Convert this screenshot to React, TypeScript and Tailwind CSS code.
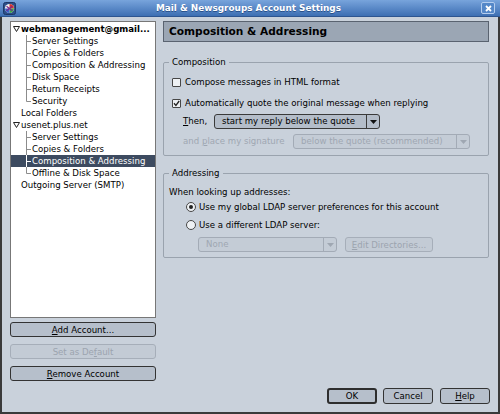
import React from "react";

function Checkbox({ checked }: { checked?: boolean }) {
  return (
    <span className="w-[9px] h-[9px] border border-[#474747] bg-[#eef1f4] rounded-[1px] flex items-center justify-center shrink-0">
      {checked && (
        <svg width="7" height="7" viewBox="0 0 7 7">
          <path d="M1 3.3 L2.9 5.4 L6.2 1" stroke="#222" strokeWidth="1.3" fill="none" />
        </svg>
      )}
    </span>
  );
}

function Radio({ checked }: { checked?: boolean }) {
  return (
    <span className="w-[10px] h-[10px] border border-[#474747] bg-[#eef1f4] rounded-full flex items-center justify-center shrink-0">
      {checked && <span className="w-[4px] h-[4px] rounded-full bg-[#222]" />}
    </span>
  );
}

function Arrow({ color }: { color: string }) {
  return (
    <svg width="7" height="4" viewBox="0 0 7 4">
      <path d="M0 0 L7 0 L3.5 4 Z" fill={color} />
    </svg>
  );
}

function Select({ className, text, disabled }: { className: string; text: string; disabled?: boolean }) {
  return (
    <div
      className={
        "h-[15px] flex rounded-[3px] border " +
        (disabled ? "border-[#a3abb6] bg-[#c4ccd6] text-[#9fa7b2] " : "border-[#3a3a3a] bg-[#b4bdc9] text-black ") +
        className
      }
    >
      <div className="flex-1 flex items-center pl-[7px] leading-[13px] whitespace-nowrap">{text}</div>
      <div
        className={
          "w-[13px] flex items-center justify-center border-l " +
          (disabled ? "border-[#a3abb6]" : "border-[#3a3a3a]")
        }
      >
        <Arrow color={disabled ? "#9fa7b2" : "#111"} />
      </div>
    </div>
  );
}

function Btn({
  children,
  className,
  disabled,
  def,
}: {
  children: React.ReactNode;
  className: string;
  disabled?: boolean;
  def?: boolean;
}) {
  return (
    <div
      className={
        "flex items-center justify-center rounded-[3px] leading-[12px] whitespace-nowrap " +
        (disabled
          ? "border border-[#a6aeb9] bg-[#c3cbd5] text-[#9ca4af] "
          : def
          ? "border-2 border-[#2e2e2e] bg-[#b6bfcb] text-black "
          : "border border-[#333] bg-[#b6bfcb] text-black ") +
        className
      }
    >
      {children}
    </div>
  );
}

function TreeLines({ last, selected }: { last?: boolean; selected?: boolean }) {
  const c = selected ? "#ffffff" : "#8c8c8c";
  return (
    <svg width="21" height="12" className="shrink-0">
      <line x1="15.5" y1="0" x2="15.5" y2={last ? 6.5 : 12} stroke={c} strokeWidth="1" />
      <line x1="15.5" y1="6.5" x2="20" y2="6.5" stroke={c} strokeWidth="1" />
    </svg>
  );
}

function Twisty() {
  return (
    <svg width="7" height="6" viewBox="0 0 7 6" className="shrink-0">
      <path d="M0.5 0.5 L6.5 0.5 L3.5 5.5 Z" fill="none" stroke="#222" strokeWidth="1" />
    </svg>
  );
}

type Row = { t: string; kind: "parent" | "child" | "leaf"; last?: boolean; sel?: boolean; bold?: boolean };

const rows: Row[] = [
  { t: "webmanagement@gmail...", kind: "parent", bold: true },
  { t: "Server Settings", kind: "child" },
  { t: "Copies & Folders", kind: "child" },
  { t: "Composition & Addressing", kind: "child" },
  { t: "Disk Space", kind: "child" },
  { t: "Return Receipts", kind: "child" },
  { t: "Security", kind: "child", last: true },
  { t: "Local Folders", kind: "leaf" },
  { t: "usenet.plus.net", kind: "parent" },
  { t: "Server Settings", kind: "child" },
  { t: "Copies & Folders", kind: "child" },
  { t: "Composition & Addressing", kind: "child", sel: true },
  { t: "Offline & Disk Space", kind: "child", last: true },
  { t: "Outgoing Server (SMTP)", kind: "leaf" },
];

export default function App() {
  return (
    <div className="w-[500px] h-[414px] flex flex-col overflow-hidden bg-[#c9d1db] text-black font-['DejaVu_Sans',sans-serif] text-[8.6px]">
      {/* Title bar */}
      <div className="h-[17px] shrink-0 flex items-center bg-linear-to-b from-[#78a4dc] to-[#3d6fb3] border-b border-[#2d5590] px-[3px]">
        <svg width="13" height="13" viewBox="0 0 13 13" className="shrink-0">
          <rect x="0.5" y="0.5" width="12" height="12" rx="2" fill="#2c4f88" stroke="#1d3766" />
          <circle cx="6.5" cy="6.5" r="4.6" fill="#f2f2f2" />
          <path d="M6.5 2 A4.5 4.5 0 0 1 11 6.5 L6.5 6.5 Z" fill="#d8342c" />
          <path d="M6.5 6.5 L11 6.5 A4.5 4.5 0 0 1 6.5 11 Z" fill="#3aa34a" />
          <path d="M6.5 6.5 L6.5 11 A4.5 4.5 0 0 1 2 6.5 Z" fill="#3b63c9" />
          <path d="M3.5 4.2 L9.4 8.8 M9.4 4.2 L3.5 8.8" stroke="#7a2a8c" strokeWidth="1.2" />
        </svg>
        <div className="flex-1 text-center text-white font-bold text-[8.9px] leading-[12px] [text-shadow:0_1px_0_#29518a]">
          Mail &amp; Newsgroups Account Settings
        </div>
        <div className="w-[14px] h-[12px] mr-[2px] border border-[#b4cdee] rounded-[2px] bg-[#5487c8] flex items-center justify-center">
          <svg width="7" height="7" viewBox="0 0 7 7">
            <path d="M1 1 L6 6 M6 1 L1 6" stroke="#fff" strokeWidth="1.8" />
          </svg>
        </div>
      </div>

      {/* Body */}
      <div className="flex-1 flex border-l-2 border-r-2 border-b-2 border-[#3a3a3a] pl-[8px] pt-[4px]">
        {/* Left column */}
        <div className="w-[146px] flex flex-col">
          <div className="h-[297px] bg-white border border-[#777] pt-[1px]">
            {rows.map((r, i) => (
              <div
                key={i}
                className={
                  "h-[12px] flex items-center leading-[12px] whitespace-nowrap " +
                  (r.sel ? "bg-[#3d4b60] text-white" : "")
                }
              >
                {r.kind === "parent" && (
                  <>
                    <span className="w-[2px]" />
                    <Twisty />
                    <span className={"ml-[1px] " + (r.bold ? "font-bold" : "")}>{r.t}</span>
                  </>
                )}
                {r.kind === "child" && (
                  <>
                    <TreeLines last={r.last} selected={r.sel} />
                    <span>{r.t}</span>
                  </>
                )}
                {r.kind === "leaf" && <span className="pl-[10px]">{r.t}</span>}
              </div>
            ))}
          </div>
          <Btn className="mt-[4px] h-[15px]">
            <span>
              <span className="underline">A</span>dd Account...
            </span>
          </Btn>
          <Btn className="mt-[7px] h-[15px]" disabled>
            <span>
              Set as De<span className="underline">f</span>ault
            </span>
          </Btn>
          <Btn className="mt-[7px] h-[15px]">
            <span>
              <span className="underline">R</span>emove Account
            </span>
          </Btn>
        </div>

        {/* Right column */}
        <div className="w-[326px] ml-[7px] flex flex-col">
          <div className="h-[21px] bg-[#9ba6b4] border border-[#5a6370] flex items-center pl-[5px] font-bold text-[10.6px]">
            Composition &amp; Addressing
          </div>

          <fieldset className="mt-[14px] border border-[#9aa3ae] rounded-[2px] pl-[5px] pr-[5px] pb-[6px]">
            <legend className="px-[3px] leading-[12px]">Composition</legend>
            <div className="mt-[8px] h-[12px] ml-[3px] flex items-center gap-[4px]">
              <Checkbox />
              <span>Compose messages in HTML format</span>
            </div>
            <div className="mt-[9px] h-[12px] ml-[3px] flex items-center gap-[4px]">
              <Checkbox checked />
              <span>Automatically quote the original message when replying</span>
            </div>
            <div className="mt-[5px] h-[15px] ml-[14px] flex items-center">
              <span className="w-[31px]">
                <span className="underline">T</span>hen,
              </span>
              <Select className="w-[166px]" text="start my reply below the quote" />
            </div>
            <div className="mt-[5px] h-[15px] ml-[14px] flex items-center">
              <span className="w-[110px] text-[#9fa7b2] whitespace-nowrap">
                and <span className="underline">p</span>lace my signature
              </span>
              <Select className="w-[177px]" text="below the quote (recommended)" disabled />
            </div>
          </fieldset>

          <fieldset className="mt-[11px] border border-[#9aa3ae] rounded-[2px] pl-[5px] pr-[5px] pb-[5px]">
            <legend className="px-[3px] leading-[12px]">Addressing</legend>
            <div className="mt-[7px] h-[12px] flex items-center">When looking up addresses:</div>
            <div className="mt-[3px] h-[12px] ml-[17px] flex items-center gap-[3px]">
              <Radio checked />
              <span>Use my global LDAP server preferences for this account</span>
            </div>
            <div className="mt-[6px] h-[12px] ml-[17px] flex items-center gap-[3px]">
              <Radio />
              <span>Use a different LDAP server:</span>
            </div>
            <div className="mt-[6px] h-[15px] ml-[29px] flex items-center gap-[8px]">
              <Select className="w-[139px]" text="None" disabled />
              <Btn className="w-[88px] h-[15px]" disabled>
                <span>
                  <span className="underline">E</span>dit Directories...
                </span>
              </Btn>
            </div>
          </fieldset>

          <div className="flex-1" />
          <div className="mb-[8px] h-[16px] flex justify-end mr-[-1px]">
            <Btn className="w-[50px] h-[16px]" def>
              OK
            </Btn>
            <Btn className="w-[50px] h-[16px] ml-[6px]">Cancel</Btn>
            <Btn className="w-[50px] h-[16px] ml-[7px]">
              <span>
                <span className="underline">H</span>elp
              </span>
            </Btn>
          </div>
        </div>
      </div>
    </div>
  );
}
